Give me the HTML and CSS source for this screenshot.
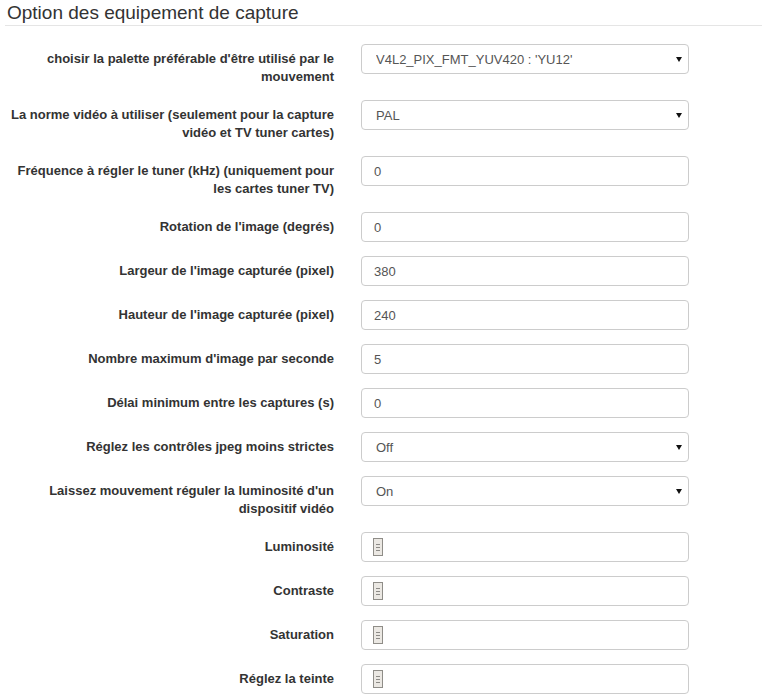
FILE: index.html
```html
<!DOCTYPE html>
<html lang="fr">
<head>
<meta charset="utf-8">
<title>Option des equipement de capture</title>
<link rel="stylesheet" href="styles.css">
</head>
<body>
<div class="panel">
  <div class="legend">Option des equipement de capture</div>
  <form class="form">
    <div class="row">
      <label class="label">choisir la palette préférable d'être utilisé par le mouvement</label>
      <div class="select-wrap"><select class="control select"><option>V4L2_PIX_FMT_YUV420 : 'YU12'</option></select></div>
    </div>
    <div class="row">
      <label class="label">La norme vidéo à utiliser (seulement pour la capture vidéo et TV tuner cartes)</label>
      <div class="select-wrap"><select class="control select"><option>PAL</option></select></div>
    </div>
    <div class="row">
      <label class="label">Fréquence à régler le tuner (kHz) (uniquement pour les cartes tuner TV)</label>
      <input class="control" type="text" value="0">
    </div>
    <div class="row">
      <label class="label">Rotation de l'image (degrés)</label>
      <input class="control" type="text" value="0">
    </div>
    <div class="row">
      <label class="label">Largeur de l'image capturée (pixel)</label>
      <input class="control" type="text" value="380">
    </div>
    <div class="row">
      <label class="label">Hauteur de l'image capturée (pixel)</label>
      <input class="control" type="text" value="240">
    </div>
    <div class="row">
      <label class="label">Nombre maximum d'image par seconde</label>
      <input class="control" type="text" value="5">
    </div>
    <div class="row">
      <label class="label">Délai minimum entre les captures (s)</label>
      <input class="control" type="text" value="0">
    </div>
    <div class="row">
      <label class="label">Réglez les contrôles jpeg moins strictes</label>
      <div class="select-wrap"><select class="control select"><option>Off</option></select></div>
    </div>
    <div class="row">
      <label class="label">Laissez mouvement réguler la luminosité d'un dispositif vidéo</label>
      <div class="select-wrap"><select class="control select"><option>On</option></select></div>
    </div>
    <div class="row">
      <label class="label">Luminosité</label>
      <div class="control range"><svg class="thumb" width="10" height="18" viewBox="0 0 10 18"><rect x="0.5" y="0.5" width="9" height="17" fill="#ebe8e3" stroke="#8f8d88"/><path d="M3 6.5h4M3 9.5h4M3 12.5h4" stroke="#8c8a86" stroke-width="1"/></svg></div>
    </div>
    <div class="row">
      <label class="label">Contraste</label>
      <div class="control range"><svg class="thumb" width="10" height="18" viewBox="0 0 10 18"><rect x="0.5" y="0.5" width="9" height="17" fill="#ebe8e3" stroke="#8f8d88"/><path d="M3 6.5h4M3 9.5h4M3 12.5h4" stroke="#8c8a86" stroke-width="1"/></svg></div>
    </div>
    <div class="row">
      <label class="label">Saturation</label>
      <div class="control range"><svg class="thumb" width="10" height="18" viewBox="0 0 10 18"><rect x="0.5" y="0.5" width="9" height="17" fill="#ebe8e3" stroke="#8f8d88"/><path d="M3 6.5h4M3 9.5h4M3 12.5h4" stroke="#8c8a86" stroke-width="1"/></svg></div>
    </div>
    <div class="row">
      <label class="label">Réglez la teinte</label>
      <div class="control range"><svg class="thumb" width="10" height="18" viewBox="0 0 10 18"><rect x="0.5" y="0.5" width="9" height="17" fill="#ebe8e3" stroke="#8f8d88"/><path d="M3 6.5h4M3 9.5h4M3 12.5h4" stroke="#8c8a86" stroke-width="1"/></svg></div>
    </div>
  </form>
</div>
</body>
</html>
```
FILE: styles.css
```css
html, body {
  margin: 0;
  padding: 0;
  background: #fff;
}
body {
  font-family: "Liberation Sans", Arial, sans-serif;
  font-size: 13px;
  color: #333;
}
.panel {
  padding: 0 0 0 5px;
}
.legend {
  font-size: 19px;
  line-height: 22px;
  padding: 2px 0 1px 2px;
  border-bottom: 1px solid #e5e5e5;
  color: #333;
}
.form {
  margin: 18px 0 0 0;
}
.row {
  display: grid;
  grid-template-columns: 329px 328px;
  column-gap: 27px;
  margin-bottom: 14px;
  align-items: start;
}
.label {
  text-align: right;
  font-weight: bold;
  line-height: 18px;
  padding-top: 6px;
  color: #333;
}
.control {
  box-sizing: border-box;
  display: block;
  width: 328px;
  height: 30px;
  margin: 0;
  padding: 0 12px;
  border: 1px solid #ccc;
  border-radius: 4px;
  background: #fff;
  font-family: "Liberation Sans", Arial, sans-serif;
  font-size: 13px;
  color: #555;
  outline: none;
}
.select-wrap {
  position: relative;
  width: 328px;
}
.select {
  -webkit-appearance: none;
  appearance: none;
  padding: 0 30px 0 14px;
}
.select-wrap::after {
  content: "";
  position: absolute;
  right: 7px;
  top: 13px;
  width: 0;
  height: 0;
  border-left: 3px solid transparent;
  border-right: 3px solid transparent;
  border-top: 5px solid #111;
  pointer-events: none;
}
.range {
  display: flex;
  align-items: center;
  padding-left: 11px;
}
.thumb {
  display: block;
}
```
